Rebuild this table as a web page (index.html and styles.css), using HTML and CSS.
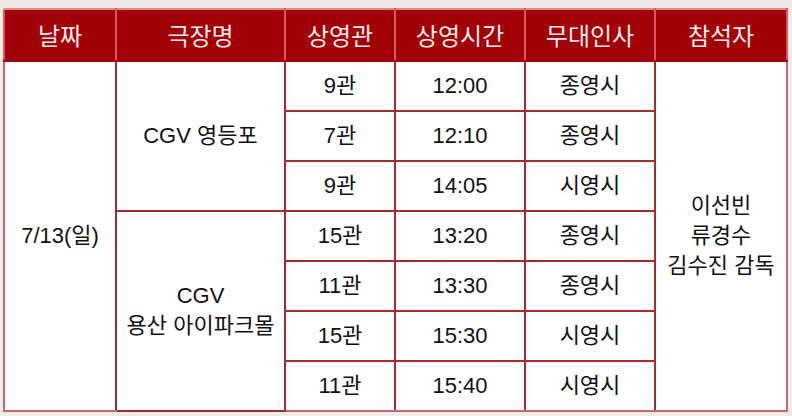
FILE: index.html
```html
<!DOCTYPE html>
<html lang="ko">
<head>
<meta charset="utf-8">
<link rel="stylesheet" href="styles.css">
</head>
<body>
<table class="sched">
  <colgroup>
    <col class="c1"><col class="c2"><col class="c3"><col class="c4"><col class="c5"><col class="c6">
  </colgroup>
  <thead>
    <tr><th>날짜</th><th>극장명</th><th>상영관</th><th>상영시간</th><th>무대인사</th><th>참석자</th></tr>
  </thead>
  <tbody>
    <tr><td rowspan="7">7/13(일)</td><td rowspan="3">CGV 영등포</td><td>9관</td><td>12:00</td><td>종영시</td><td rowspan="7">이선빈<br>류경수<br>김수진 감독</td></tr>
    <tr><td>7관</td><td>12:10</td><td>종영시</td></tr>
    <tr><td>9관</td><td>14:05</td><td>시영시</td></tr>
    <tr><td rowspan="4">CGV<br>용산 아이파크몰</td><td>15관</td><td>13:20</td><td>종영시</td></tr>
    <tr><td>11관</td><td>13:30</td><td>종영시</td></tr>
    <tr><td>15관</td><td>15:30</td><td>시영시</td></tr>
    <tr><td>11관</td><td>15:40</td><td>시영시</td></tr>
  </tbody>
</table>
</body>
</html>
```
FILE: styles.css
```css
html, body {
  margin: 0;
  padding: 0;
  background: #f1eaea;
}
body {
  padding: 8px 0 0 3px;
  font-family: "Liberation Sans", "Noto Sans CJK KR", sans-serif;
}
.sched {
  border-collapse: collapse;
  table-layout: fixed;
  width: 783px;
  background: #ffffff;
  border: 2px solid #c46a6e;
}
.c1 { width: 112px; }
.c2 { width: 169px; }
.c3 { width: 110px; }
.c4 { width: 130px; }
.c5 { width: 130px; }
.c6 { width: 132px; }
.sched th {
  height: 50px;
  padding: 0;
  background: #a00208;
  color: #fbeaea;
  font-family: "Noto Sans CJK KR", sans-serif;
  font-weight: 400;
  font-size: 24px;
  line-height: 30px;
  border-left: 2px solid #d25a5e;
  border-right: 2px solid #d25a5e;
  border-top: 2px solid #d88a8c;
  border-bottom: 2px solid #a00208;
  text-align: center;
  vertical-align: middle;
}
.sched td {
  height: 48px;
  padding: 0;
  border: 2px solid #a52a30;
  color: #111111;
  font-size: 22px;
  line-height: 30px;
  text-align: center;
  vertical-align: middle;
}
.sched tbody tr:last-child td,
.sched tbody td[rowspan="7"] {
  border-bottom-color: #c46a6e;
}
.sched tbody td:first-child {
  border-left-color: #c46a6e;
}
.sched tbody tr:first-child td:last-child {
  border-right-color: #c46a6e;
}
```
